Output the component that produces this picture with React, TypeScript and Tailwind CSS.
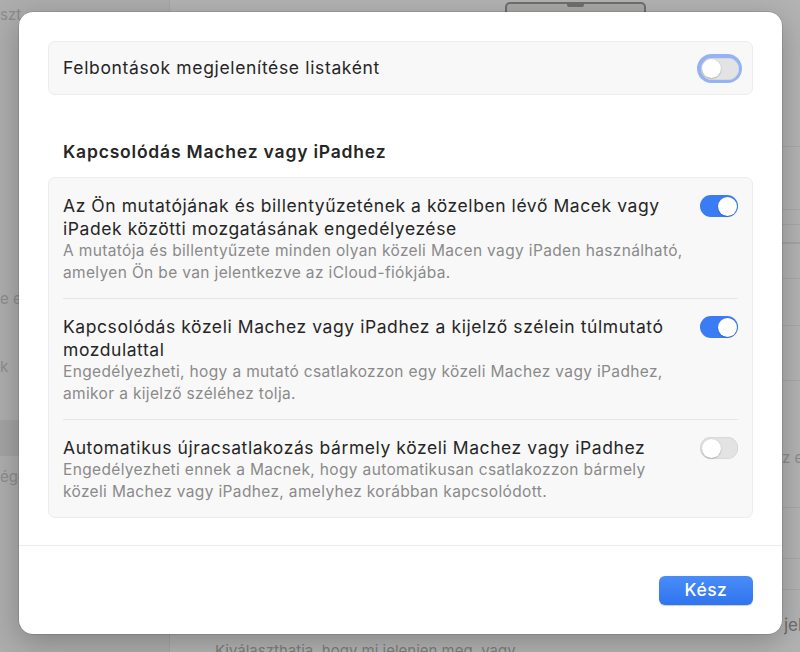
import type { ReactNode } from 'react';

const ROWS = [
  {
    title: 'Az Ön mutatójának és billentyűzetének a közelben lévő Macek vagy iPadek közötti mozgatásának engedélyezése',
    desc: 'A mutatója és billentyűzete minden olyan közeli Macen vagy iPaden használható, amelyen Ön be van jelentkezve az iCloud-fiókjába.',
    on: true,
  },
  {
    title: 'Kapcsolódás közeli Machez vagy iPadhez a kijelző szélein túlmutató mozdulattal',
    desc: 'Engedélyezheti, hogy a mutató csatlakozzon egy közeli Machez vagy iPadhez, amikor a kijelző széléhez tolja.',
    on: true,
  },
  {
    title: 'Automatikus újracsatlakozás bármely közeli Machez vagy iPadhez',
    desc: 'Engedélyezheti ennek a Macnek, hogy automatikusan csatlakozzon bármely közeli Machez vagy iPadhez, amelyhez korábban kapcsolódott.',
    on: false,
  },
];

function Toggle({ on, focused }: { on: boolean; focused?: boolean }) {
  const track = (
    <div
      className={`flex h-[22px] w-[38px] items-center rounded-full p-[1.5px] ${
        on ? 'justify-end bg-[#3a7cf4]' : 'justify-start bg-[#e3e3e3] shadow-[inset_0_0_0_0.5px_#d0d0d0]'
      }`}
    >
      <div className="h-[19px] w-[19px] rounded-full bg-white shadow-[0_0.5px_1.5px_rgba(0,0,0,0.3)]" />
    </div>
  );
  if (!focused) return track;
  return <div className="rounded-full bg-[#93b3f6] p-[3.5px]">{track}</div>;
}

function Card({ children }: { children: ReactNode }) {
  return <div className="rounded-[7px] border border-[#ececec] bg-[#f8f8f8]">{children}</div>;
}

function Backdrop() {
  return (
    <div className="absolute inset-0 flex bg-[#b3b3b3] text-[15px] text-[#8c8c8c]">
      {/* sidebar */}
      <div className="flex w-[170px] flex-col border-r border-[#a6a6a6] bg-[#adadad]">
        <div className="pt-[4px] leading-[22px]">szt</div>
        <div className="mt-[262px] leading-[22px]">e e</div>
        <div className="mt-[46px] leading-[22px]">k</div>
        <div className="mt-[42px] h-[36px] bg-[#a3a3a3]" />
        <div className="mt-[10px] leading-[22px]">ége</div>
      </div>
      {/* content */}
      <div className="relative flex flex-1 flex-col">
        <div className="pl-[335px] pt-[2px]">
          <div className="h-[16px] w-[141px] rounded-[5px] border-[2.5px] border-[#6f6f6f] bg-[#a9a9a8]">
            <div className="mx-auto h-[3px] w-[17px] rounded-b-[2px] bg-[#6f6f6f]" />
          </div>
        </div>
        <div className="mt-[128px] flex flex-col items-end">
          <div className="h-px w-[20px] bg-[#a8a8a8]" />
          <div className="mt-[62px] h-px w-[20px] bg-[#a8a8a8]" />
          <div className="mt-[14px] h-px w-[20px] bg-[#a8a8a8]" />
          <div className="mt-[17px] h-[2px] w-[20px] bg-[#a4a4a4]" />
          <div className="mt-[34px] h-px w-[20px] bg-[#a8a8a8]" />
          <div className="mt-[46px] h-px w-[20px] bg-[#a8a8a8]" />
          <div className="mt-[54px] h-px w-[20px] bg-[#a8a8a8]" />
          <div className="mt-[66px] w-[18px] overflow-hidden whitespace-nowrap leading-[22px]">z e</div>
          <div className="mt-[38px] h-px w-[20px] bg-[#a8a8a8]" />
          <div className="mt-[50px] h-px w-[20px] bg-[#a8a8a8]" />
          <div className="mt-[30px] h-px w-[20px] bg-[#a8a8a8]" />
          <div className="mt-[24px] w-[16px] overflow-hidden whitespace-nowrap text-[17px] leading-[22px] text-[#6e6e6e]">jelö</div>
        </div>
        <div className="absolute bottom-[-10px] left-[45px] whitespace-nowrap leading-[22px] text-[#7e7e7e]">
          Kiválaszthatja, hogy mi jelenjen meg, vagy
        </div>
      </div>
    </div>
  );
}

export default function App() {
  return (
    <div
      className="relative h-[652px] w-[800px] overflow-hidden"
      style={{ fontFamily: 'Inter, "Noto Sans", sans-serif' }}
    >
      <Backdrop />

      {/* sheet */}
      <div className="absolute left-[19px] top-[12px] flex h-[622px] w-[763px] flex-col rounded-[14px] bg-white shadow-[0_0_0_0.5px_rgba(0,0,0,0.2),0_8px_30px_rgba(0,0,0,0.25)]">
        <div className="flex flex-1 flex-col px-[29px] pt-[29px]">
          <Card>
            <div className="flex h-[52px] items-center justify-between pl-[14px] pr-[10px] pt-[1px]">
              <span className="text-[17.5px] tracking-[0.65px] text-[#262626]">Felbontások megjelenítése listaként</span>
              <Toggle on={false} focused />
            </div>
          </Card>

          <h2 className="mt-[46px] pl-[15px] text-[17.5px] font-semibold leading-[22px] tracking-[0.8px] text-[#262626]">
            Kapcsolódás Machez vagy iPadhez
          </h2>

          <div className="mt-[14px]">
            <Card>
              <div className="px-[14px]">
                {ROWS.map((row, i) => (
                  <div
                    key={row.title}
                    className={`flex items-start justify-between gap-4 pb-[14px] pt-[16px] ${
                      i < ROWS.length - 1 ? 'border-b border-[#e6e6e6]' : ''
                    }`}
                  >
                    <div>
                      <div className="text-[17.5px] leading-[23px] tracking-[0.57px] text-[#262626]">{row.title}</div>
                      <div className="text-[15.5px] leading-[22px] tracking-[0.35px] text-[#8a8a8a]">{row.desc}</div>
                    </div>
                    <div className="mt-[1px] shrink-0">
                      <Toggle on={row.on} />
                    </div>
                  </div>
                ))}
              </div>
            </Card>
          </div>
        </div>

        <div className="flex justify-end border-t border-[#ececec] px-[29px] pb-[29px] pt-[30px]">
          <button className="h-[29px] w-[94px] rounded-[6px] bg-gradient-to-b from-[#4a8cf7] to-[#2f74f0] text-[17.5px] font-medium tracking-[0.5px] text-white shadow-[0_0.5px_1px_rgba(0,0,0,0.2)]">
            Kész
          </button>
        </div>
      </div>
    </div>
  );
}
